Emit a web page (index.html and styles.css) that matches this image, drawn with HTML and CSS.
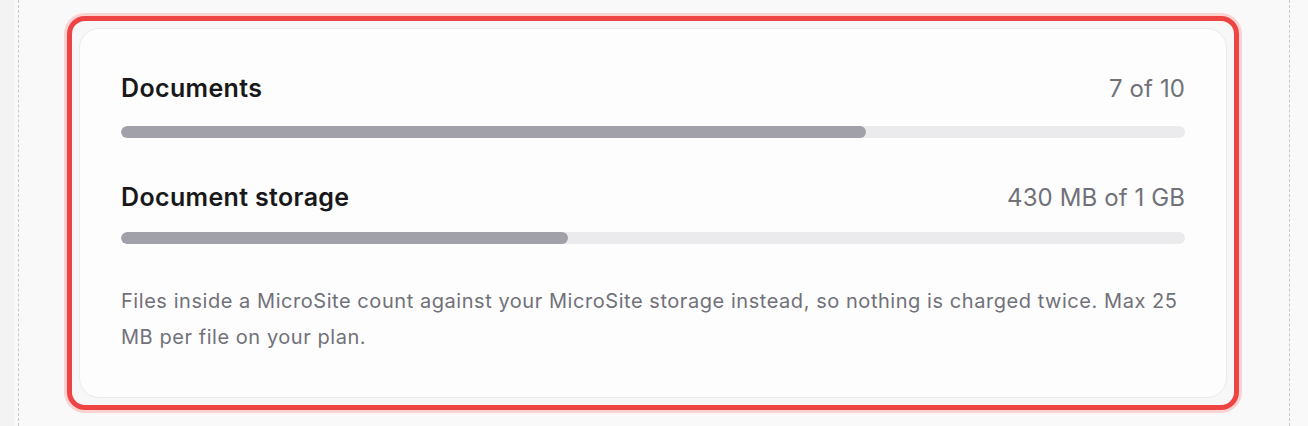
FILE: index.html
```html
<!DOCTYPE html>
<html lang="en">
<head>
<meta charset="utf-8">
<title>Usage</title>
<link rel="stylesheet" href="styles.css">
</head>
<body>
<div class="page">
  <div class="column">
    <div class="highlight">
      <section class="card">
        <div class="meter meter-count">
          <div class="meter-head">
            <h3 class="meter-title">Documents</h3>
            <span class="meter-value">7 of 10</span>
          </div>
          <div class="track"><div class="fill" style="width:70%"></div></div>
        </div>
        <div class="meter meter-storage">
          <div class="meter-head">
            <h3 class="meter-title">Document storage</h3>
            <span class="meter-value">430 MB of 1 GB</span>
          </div>
          <div class="track"><div class="fill" style="width:42%"></div></div>
        </div>
        <p class="note">Files inside a MicroSite count against your MicroSite storage instead, so nothing is charged twice. Max 25 MB per file on your plan.</p>
      </section>
    </div>
  </div>
</div>
</body>
</html>
```

FILE: styles.css
```css
* { box-sizing: border-box; }
html, body { margin: 0; padding: 0; }
body {
  background: #f3f3f4;
  font-family: "Inter", "Liberation Sans", sans-serif;
  height: 426px;
  overflow: hidden;
}
.page {
  margin-left: 14px;
  height: 426px;
  background: #f9f9f9;
  padding-left: 4px;
}
.column {
  width: 1272px;
  height: 426px;
  border-left: 1.5px dashed #c9c9cc;
  border-right: 1.5px dashed #c9c9cc;
  padding: 16px 0 0 48px;
}
.highlight {
  width: 1172px;
  border: 5px solid #ef4444;
  border-radius: 18px;
  box-shadow: 0 0 0 3px #fbd3d3;
  padding: 7px;
  background: #f7f7f7;
}
.card {
  background: #fdfdfd;
  border: 1px solid #ebebeb;
  border-radius: 20px;
  padding: 41px 41px 42px;
}
.meter { margin-bottom: 41px; }
.meter-head {
  display: flex;
  justify-content: space-between;
  align-items: baseline;
  line-height: 36px;
  margin-bottom: 19px;
}
.meter-storage .meter-head { margin-bottom: 16px; }
.meter-title {
  margin: 0;
  font-size: 25px;
  font-weight: 600;
  color: #18181b;
  letter-spacing: 0.35px;
}
.meter-value {
  font-size: 24px;
  color: #71717a;
  letter-spacing: 0.1px;
}
.track {
  height: 12px;
  border-radius: 6px;
  background: #ebebee;
  overflow: hidden;
}
.fill {
  height: 100%;
  border-radius: 6px;
  background: #a1a1a9;
}
.note {
  margin: -2px 0 0;
  font-size: 20px;
  line-height: 36px;
  letter-spacing: 0.55px;
  color: #71717a;
}
```
